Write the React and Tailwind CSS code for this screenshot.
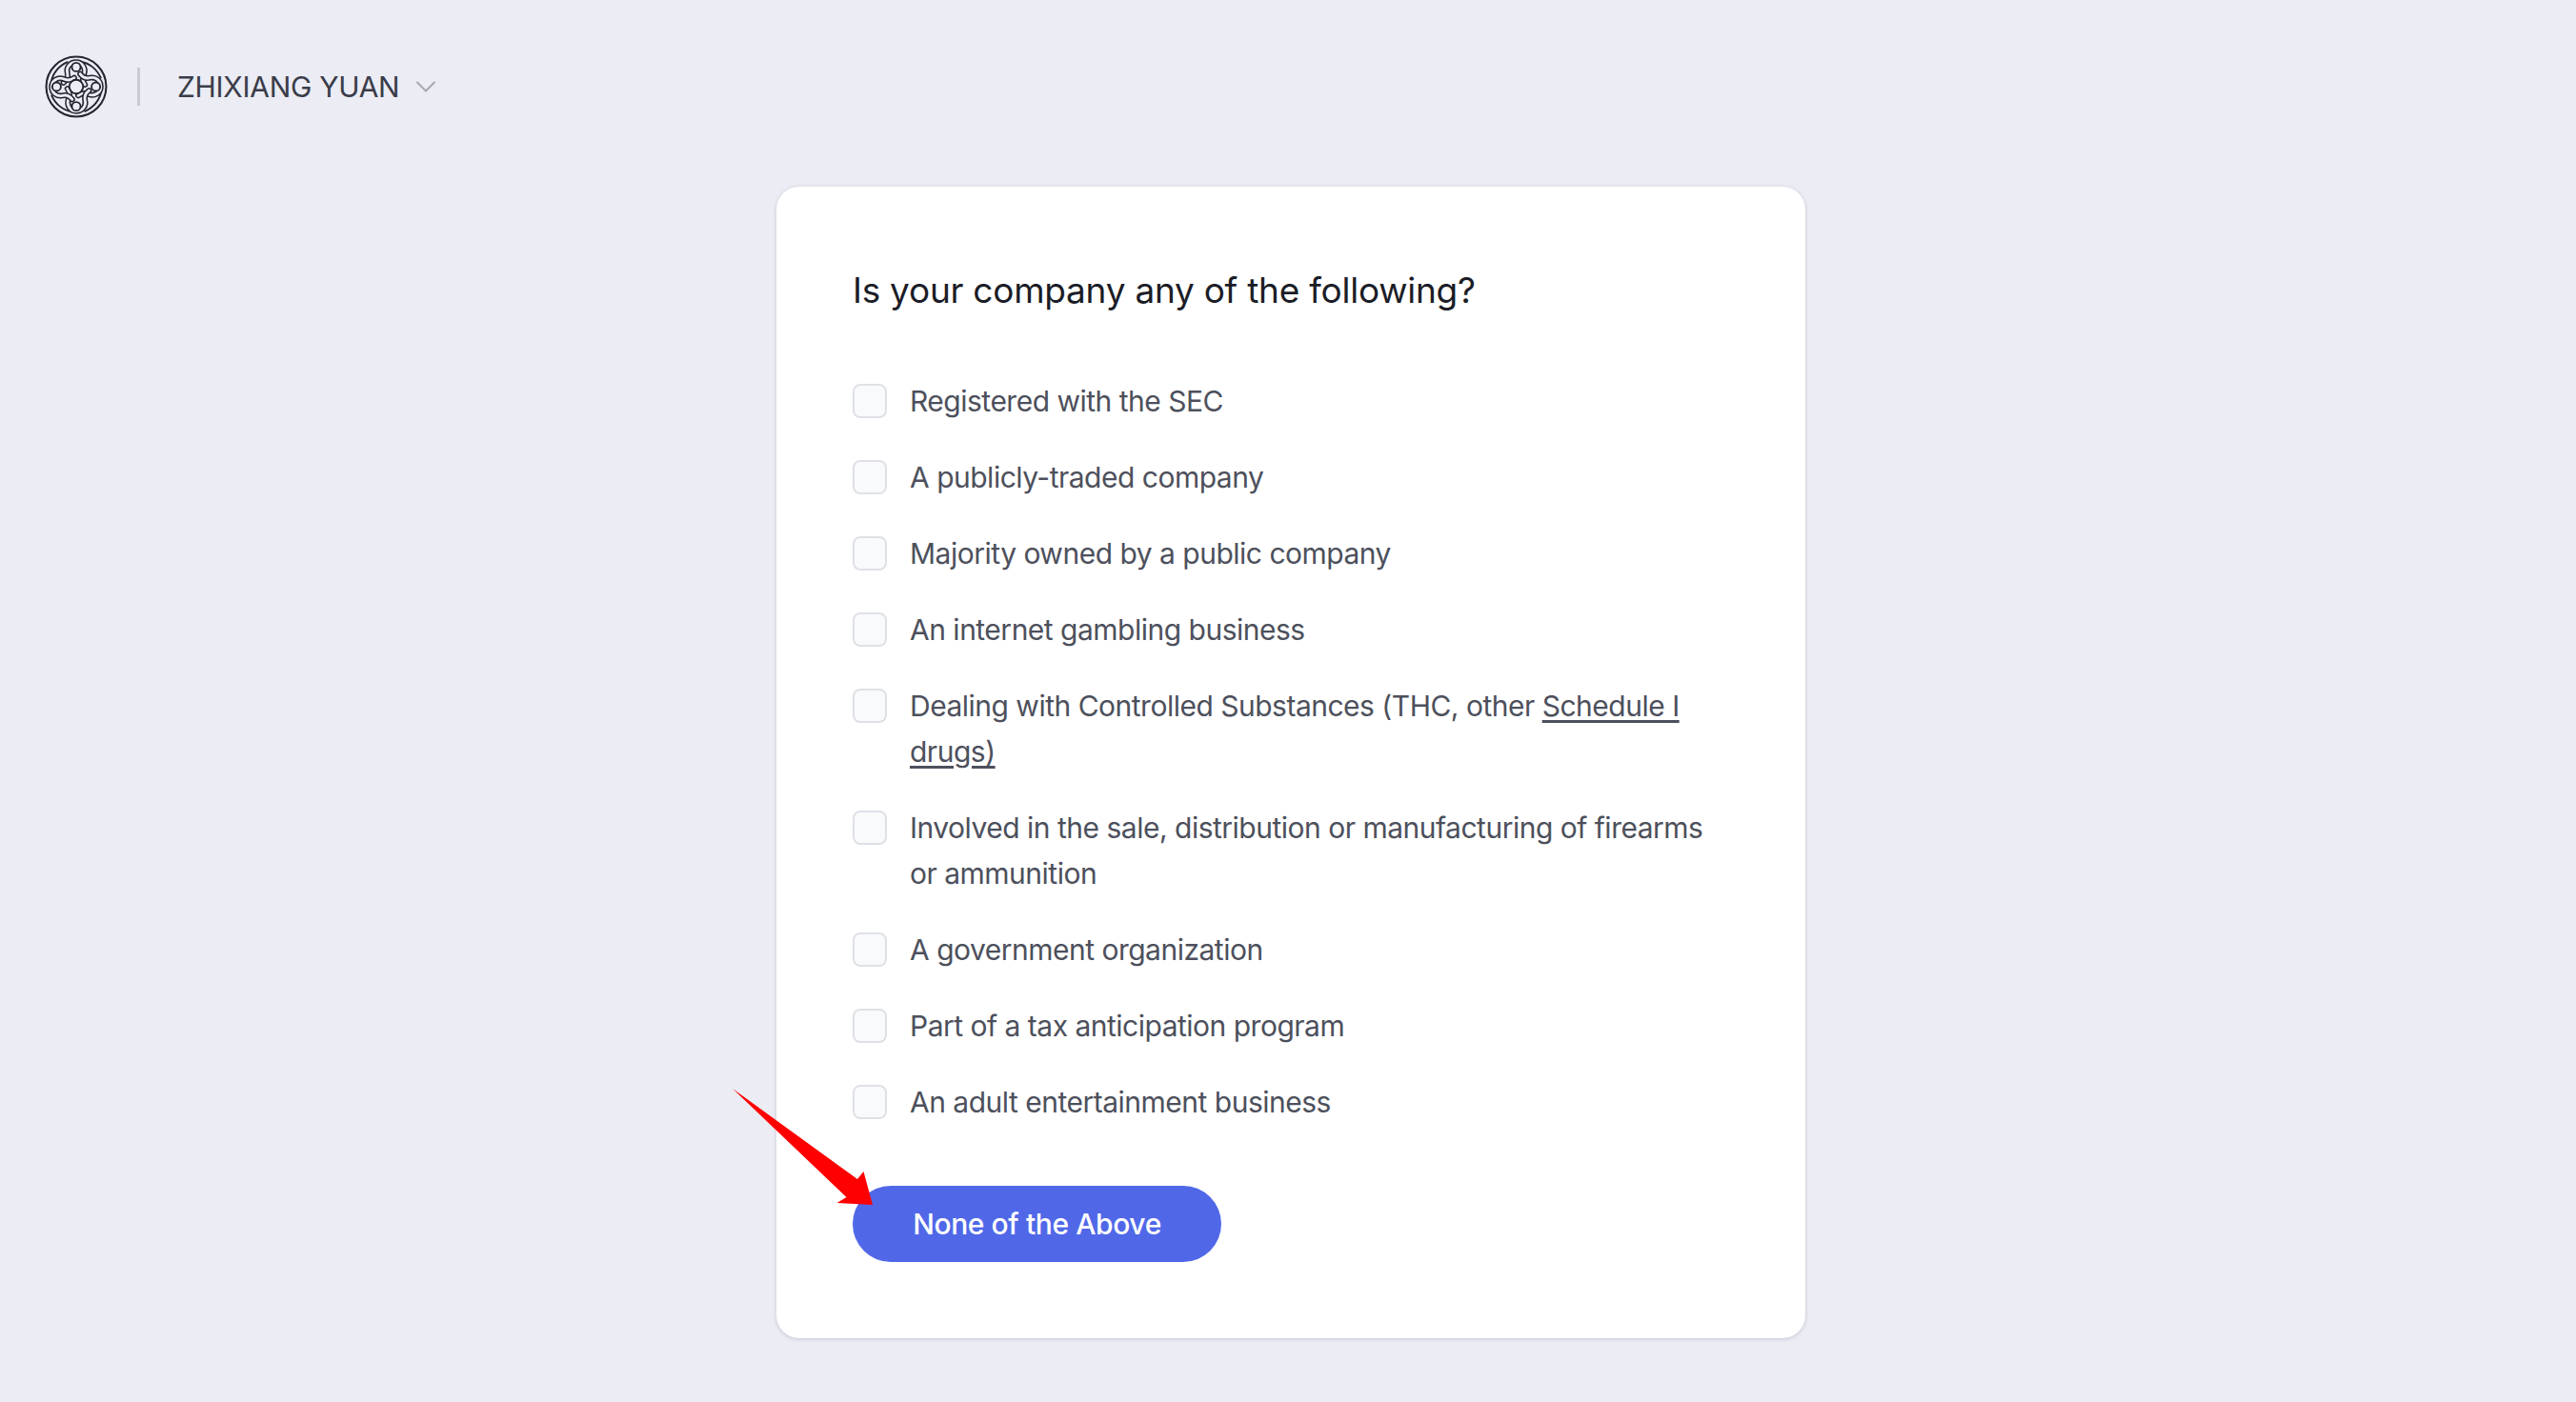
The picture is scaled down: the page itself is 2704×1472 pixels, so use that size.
import { ChevronDown } from 'lucide-react';

const items = [
  ['Registered with the SEC'],
  ['A publicly-traded company'],
  ['Majority owned by a public company'],
  ['An internet gambling business'],
  [
    'Dealing with Controlled Substances (THC, other ',
    <a key="link" href="#" className="underline underline-offset-4">Schedule I drugs)</a>,
  ],
  ['Involved in the sale, distribution or manufacturing of firearms or ammunition'],
  ['A government organization'],
  ['Part of a tax anticipation program'],
  ['An adult entertainment business'],
];

const knot = 'M41 30 C38 26 38 23 40 19 C42 13 38 7 32 7 C26 7 21.5 12 23 18 C24 22 23 25 19 28';
const outer = 'M36 6.5 C45 7.5 53 14 57 23';

function Logo() {
  const rotations = [0, 90, 180, 270];
  return (
    <svg width="66" height="66" viewBox="0 0 64 64" fill="none" strokeLinecap="round">
      <circle cx="32" cy="32" r="30.5" stroke="#23252f" strokeWidth="2" />
      {rotations.map((deg) => (
        <g key={deg} transform={`rotate(${deg} 32 32)`}>
          <path d={outer} stroke="#23252f" strokeWidth="1.8" />
        </g>
      ))}
      {rotations.map((deg) => (
        <g key={deg} transform={`rotate(${deg} 32 32)`}>
          <path d={knot} stroke="#23252f" strokeWidth="5.8" />
          <path d={knot} stroke="#ebecf4" strokeWidth="2.8" />
          <circle cx="32" cy="12" r="4.4" stroke="#23252f" strokeWidth="1.8" fill="#ebecf4" />
        </g>
      ))}
      <circle cx="32" cy="32" r="7" stroke="#23252f" strokeWidth="1.8" fill="#ebecf4" />
    </svg>
  );
}

function Row({ children }) {
  return (
    <label className="flex items-start">
      <span className="mt-[6px] h-[36px] w-[36px] shrink-0 rounded-lg border-2 border-[#dfe1e7] bg-[#f9fafc]" />
      <span className="ml-[24px] text-[30px] leading-[48px] tracking-[-0.5px] text-[#4d505c]">{children}</span>
    </label>
  );
}

export default function App() {
  return (
    <div className="min-h-screen bg-[#ebecf4] font-['Inter',sans-serif]">
      <header className="flex h-[182px] items-center pl-[47px]">
        <Logo />
        <div className="ml-[31px] h-[40px] w-[3px] bg-[#c9cad2]" />
        <span className="ml-[39px] text-[30px] tracking-[-0.3px] text-[#3a3c49]">ZHIXIANG YUAN</span>
        <ChevronDown className="ml-[10px] text-[#a5a7b0]" size={36} strokeWidth={1.3} />
      </header>

      <div className="flex justify-center pl-[6px] pt-[14px]">
        <main className="relative w-[1080px] rounded-[24px] bg-white px-[80px] pb-[80px] pt-[79px] shadow-[0_1px_4px_rgba(30,35,60,0.18)]">
          <h1 className="text-[37px] leading-[60px] tracking-[-0.25px] text-[#1b1d26]">Is your company any of the following?</h1>
          <div className="mt-[62px] flex flex-col gap-[32px]">
            {items.map((content, i) => (
              <Row key={i}>{content}</Row>
            ))}
          </div>
          <button className="mt-[64px] h-[80px] w-[387px] rounded-full bg-[#5068e8] text-[30px] font-medium tracking-[-0.4px] text-white">
            None of the Above
          </button>
          {/* flèche rouge par-dessus le bouton */}
          <svg className="absolute left-[-50px] top-[947px]" width="160" height="130" viewBox="765 1143 160 130">
            <polygon points="769,1143 900,1238 906.5,1230 916,1265 878.5,1263 888.5,1257" fill="#ff0000" />
          </svg>
        </main>
      </div>
    </div>
  );
}
